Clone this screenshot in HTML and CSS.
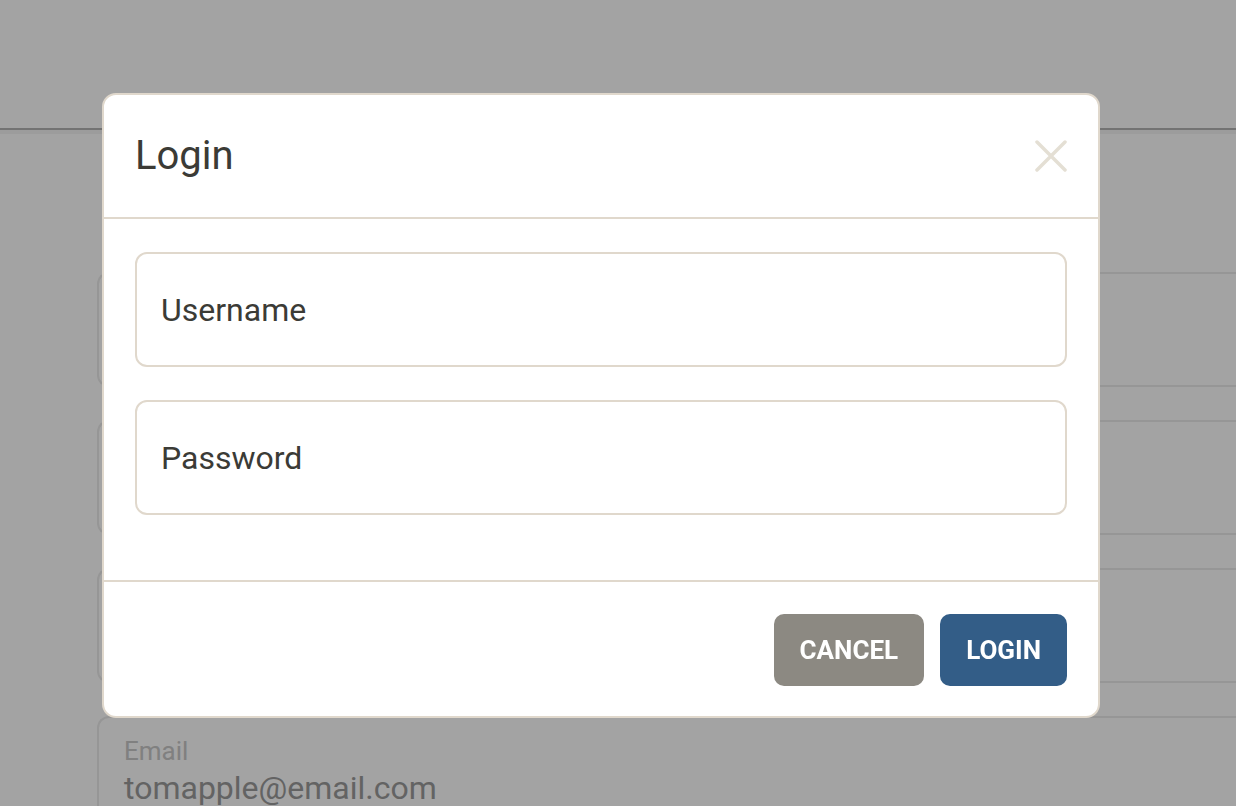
FILE: index.html
```html
<!DOCTYPE html>
<html lang="en">
<head>
<meta charset="utf-8">
<title>Login</title>
<link rel="stylesheet" href="styles.css">
</head>
<body>
<div class="page">
  <header class="topbar"></header>
  <main class="form">
    <div class="field"></div>
    <div class="field"></div>
    <div class="field"></div>
    <div class="field">
      <span class="field-label">Email</span>
      <span class="field-value">tomapple@email.com</span>
    </div>
  </main>
</div>

<div class="overlay"></div>

<div class="modal" role="dialog" aria-labelledby="modal-title">
  <div class="modal-header">
    <h2 class="modal-title" id="modal-title">Login</h2>
    <button class="close-btn" aria-label="Close">
      <svg viewBox="0 0 32 32" width="32" height="32">
        <path d="M2 2 L30 30 M30 2 L2 30" fill="none" stroke="#e4dfd4" stroke-width="3.5" stroke-linecap="round"/>
      </svg>
    </button>
  </div>
  <div class="modal-body">
    <input class="text-input" type="text" placeholder="Username">
    <input class="text-input" type="password" placeholder="Password">
  </div>
  <div class="modal-footer">
    <button class="btn btn-cancel">CANCEL</button>
    <button class="btn btn-login">LOGIN</button>
  </div>
</div>
</body>
</html>
```

FILE: styles.css
```css
* { box-sizing: border-box; }

html, body {
  margin: 0;
  padding: 0;
  width: 1236px;
  height: 806px;
  overflow: hidden;
  background: #ffffff;
  font-family: Roboto, "Noto Sans", "Liberation Sans", sans-serif;
}

.page {
  display: flex;
  flex-direction: column;
}

.topbar {
  height: 130px;
  background: #ffffff;
  border-bottom: 2px solid #b4b4b4;
  box-shadow: 0 4px 0 rgba(0, 0, 0, 0.04);
}

.form {
  display: flex;
  flex-direction: column;
  gap: 33px;
  padding: 142px 0 0 97px;
}

.field {
  height: 115px;
  flex-shrink: 0;
  border: 2px solid #ebebeb;
  border-right: 0;
  border-radius: 12px 0 0 12px;
  padding: 18px 25px 0;
  display: flex;
  flex-direction: column;
  gap: 3px;
}

.field-label {
  font-size: 26px;
  line-height: 30px;
  color: #c8c8c8;
}

.field-value {
  font-size: 32px;
  line-height: 38px;
  color: #9c9c9c;
}

.overlay {
  position: fixed;
  inset: 0;
  background: rgba(0, 0, 0, 0.36);
}

.modal {
  position: fixed;
  left: 102px;
  top: 93px;
  width: 998px;
  background: #ffffff;
  border: 2px solid #e0d8cc;
  border-radius: 14px;
  display: flex;
  flex-direction: column;
}

.modal-header {
  height: 124px;
  display: flex;
  align-items: center;
  justify-content: space-between;
  padding: 0 31px;
  border-bottom: 2px solid #e0d8cc;
}

.modal-title {
  margin: 0;
  font-size: 40px;
  line-height: 40px;
  font-weight: 400;
  color: #3b3b36;
}

.close-btn {
  width: 32px;
  height: 32px;
  padding: 0;
  border: 0;
  background: transparent;
  display: flex;
}

.modal-body {
  display: flex;
  flex-direction: column;
  gap: 33px;
  padding: 33px 31px 65px;
  border-bottom: 2px solid #e0d8cc;
}

.text-input {
  height: 115px;
  width: 100%;
  border: 2px solid #e0d8cc;
  border-radius: 12px;
  padding: 0 24px;
  font-family: Roboto, "Noto Sans", "Liberation Sans", sans-serif;
  font-size: 32px;
  color: #3b3b36;
  background: #ffffff;
  outline: none;
}

.text-input::placeholder {
  color: #3b3b36;
  opacity: 1;
}

.modal-footer {
  display: flex;
  justify-content: flex-end;
  gap: 16px;
  padding: 32px 31px 30px;
}

.btn {
  height: 72px;
  padding: 0 26px;
  border: 0;
  border-radius: 10px;
  font-family: Roboto, "Noto Sans", "Liberation Sans", sans-serif;
  font-size: 26px;
  font-weight: 700;
  color: #ffffff;
  cursor: pointer;
}

.btn-cancel { background: #8c8982; }
.btn-login { background: #335d87; }
```
